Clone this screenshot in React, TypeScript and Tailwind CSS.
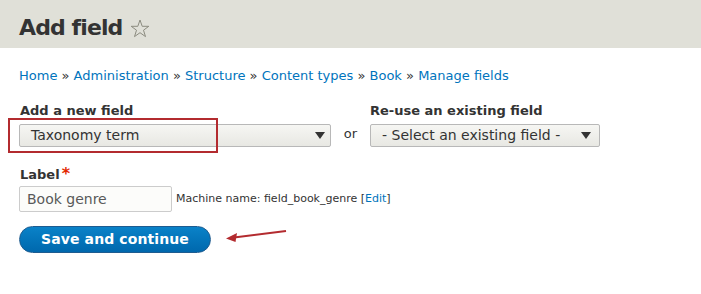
import React from "react";

const links = ["Home", "Administration", "Structure", "Content types", "Book", "Manage fields"];

const Caret = () => (
  <svg width="10" height="7" viewBox="0 0 10 7" className="shrink-0">
    <path d="M0 0 L10 0 L5 7 Z" fill="#333" />
  </svg>
);

const App = () => {
  return (
    <div className="w-[701px] h-[294px] bg-white text-[#333] font-['DejaVu_Sans',sans-serif] overflow-hidden">
      <div className="h-[48px] bg-[#e0e0d8] flex items-center px-[19px] pt-[8px]">
        <h1 className="text-[22px] font-bold leading-none tracking-[-0.9px] text-[#333]">Add field</h1>
        <svg width="20" height="19" viewBox="0 0 20 19" className="ml-[8px] mt-[1px]">
          <path
            d="M10 1 L12.2 7.3 L18.8 7.3 L13.5 11.2 L15.5 17.6 L10 13.7 L4.5 17.6 L6.5 11.2 L1.2 7.3 L7.8 7.3 Z"
            fill="none"
            stroke="#8c8c80"
            strokeWidth="1"
            strokeLinejoin="round"
          />
        </svg>
      </div>

      <div className="px-[19px] pt-[20px]">
        <nav className="text-[13px] leading-[16px] whitespace-pre">
          {links.map((l, i) => (
            <span key={l}>
              {i > 0 && <span className="text-[#333]"> » </span>}
              <a className="text-[#0074bd]">{l}</a>
            </span>
          ))}
        </nav>

        <div className="flex items-end mt-[19px]">
          <div className="relative">
            <div className="text-[13px] font-bold leading-[16px] pl-[1px]">Add a new field</div>
            <div className="w-[312px] h-[23px] mt-[5px] border border-[#b8b8b8] rounded-[2px] bg-gradient-to-b from-[#f6f6f3] to-[#e8e8e3] flex items-center justify-between pl-[11px] pr-[5px] text-[14px]">
              <span>Taxonomy term</span>
              <Caret />
            </div>
            <div className="absolute left-[-11px] top-[15px] w-[210px] h-[35px] border-2 border-[#b32b2f]" />
          </div>
          <div className="w-[39px] text-[13px] text-center h-[23px] leading-[20px]">or</div>
          <div>
            <div className="text-[13px] font-bold leading-[16px]">Re-use an existing field</div>
            <div className="w-[230px] h-[23px] mt-[5px] border border-[#b8b8b8] rounded-[2px] bg-gradient-to-b from-[#f6f6f3] to-[#e8e8e3] flex items-center justify-between pl-[11px] pr-[8px] text-[14px]">
              <span>- Select an existing field -</span>
              <Caret />
            </div>
          </div>
        </div>

        <div className="mt-[19px]">
          <div className="text-[13px] font-bold leading-[16px] pl-[1px]">
            Label<span className="text-[#e32700] text-[16px] ml-[2px]">*</span>
          </div>
          <div className="flex items-center mt-[3px]">
            <div className="w-[153px] h-[26px] border border-[#ccc] rounded-[2px] bg-[#fcfcfa] flex items-center pl-[7px] text-[14px] text-[#595959]">
              Book genre
            </div>
            <span className="ml-[4px] text-[11px] text-[#333]">
              Machine name: field_book_genre [<a className="text-[#0074bd]">Edit</a>]
            </span>
          </div>
        </div>

        <div className="flex items-center mt-[14px]">
          <button className="w-[192px] h-[27px] rounded-full bg-gradient-to-b from-[#0a82c8] to-[#0068ad] border border-[#1e5c90] text-white font-bold text-[14px] tracking-[0.1px]">
            Save and continue
          </button>
          <svg width="62" height="14" viewBox="0 0 62 14" className="ml-[15px] mt-[-8px]">
            <path d="M60 2 L8 8.5" stroke="#b32b2f" strokeWidth="2" />
            <path d="M0 9.5 L11 4 L9.5 13 Z" fill="#b32b2f" />
          </svg>
        </div>
      </div>
    </div>
  );
};

export default App;
